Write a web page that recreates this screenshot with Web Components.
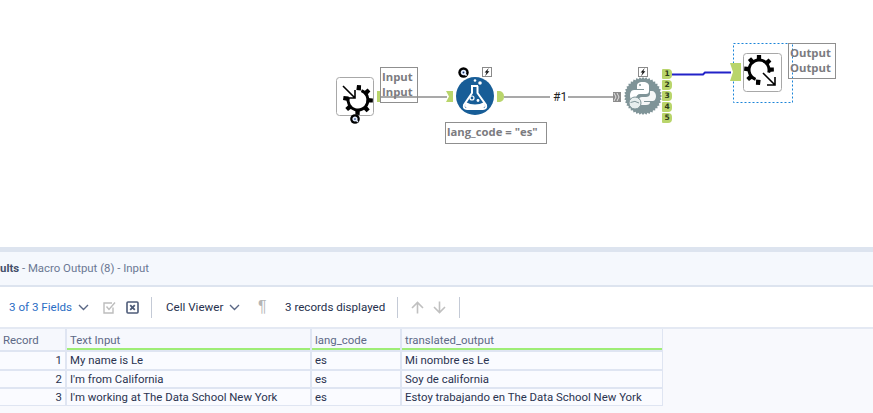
<!DOCTYPE html>
<html>
<head>
<meta charset="utf-8">
<title>Workflow results</title>
<style>
  html, body { margin: 0; padding: 0; background: #fff; }
  body { width: 873px; height: 413px; overflow: hidden; font-family: Roboto, 'Noto Sans', sans-serif; }
</style>
</head>
<body>
<workflow-canvas></workflow-canvas>
<results-panel></results-panel>

<script>
// shared little svg helpers
const gearMarkup = (cx, cy, r, start, end, teeth) => {
  const rad = d => d * Math.PI / 180;
  const pt = (d, rr) => `${(cx + rr * Math.cos(rad(d))).toFixed(1)} ${(cy + rr * Math.sin(rad(d))).toFixed(1)}`;
  let s = `<path d="M${pt(start, r)} A${r} ${r} 0 1 1 ${pt(end, r)}" fill="none" stroke="#000" stroke-width="3"/>`;
  teeth.forEach(d => {
    s += `<path d="M${pt(d - 13, r)} L${pt(d - 8, r + 5)} L${pt(d + 8, r + 5)} L${pt(d + 13, r)} Z" fill="#000"/>`;
  });
  return s;
};

const toothedCircle = (cx, cy, r, R, n) => {
  let d = '';
  for (let i = 0; i < n; i++) {
    const a = i * 2 * Math.PI / n, b = (i + 0.5) * 2 * Math.PI / n;
    d += `${i ? 'L' : 'M'}${(cx + R * Math.cos(a)).toFixed(1)} ${(cy + R * Math.sin(a)).toFixed(1)} L${(cx + r * Math.cos(b)).toFixed(1)} ${(cy + r * Math.sin(b)).toFixed(1)} `;
  }
  return d + 'Z';
};

const BOLT = `<svg width="10" height="10" viewBox="0 0 10 10" style="position:absolute;display:block">
  <rect x=".5" y=".5" width="9" height="9" fill="#fff" stroke="#8a8a8a"/>
  <path d="M6.8 .9 L2.6 5.6 H4.6 L3 9.2 L7.4 4.2 H5.3 Z" fill="#111"/></svg>`;

const qBadge = (x, y, r) => `<circle cx="${x}" cy="${y}" r="${r}" fill="#000"/>
  <circle cx="${x}" cy="${y}" r="${r * 0.36}" fill="#12306e" stroke="#e4eeff" stroke-width="${r * 0.36}"/>
  <path d="M${x + r * 0.15} ${y + r * 0.15} L${x + r * 0.6} ${y + r * 0.6}" stroke="#e4eeff" stroke-width="${r * 0.3}"/>`;

const tplCanvas = document.createElement('template');
tplCanvas.innerHTML = `
  <style>
    :host { display: block; position: relative; height: 247px; background: #fff; overflow: hidden; }
    svg.wires { position: absolute; left: 0; top: 0; }
    .tool { position: absolute; }
    .bolt { position: absolute; width: 10px; height: 10px; }
  </style>
  <svg class="wires" width="873" height="247" viewBox="0 0 873 247">
    <path d="M380 97 H447" stroke="#a9a9a9" stroke-width="2" fill="none"/>
    <path d="M504 97 H550 M568 97 H614" stroke="#a9a9a9" stroke-width="2" fill="none"/>
    <path d="M672 74.5 H703 L705 72.5 H731" stroke="#2222c8" stroke-width="2" fill="none"/>
    <rect x="733.5" y="43.5" width="59" height="59" fill="none" stroke="#1b84d8" stroke-dasharray="2 2"/>
    <path d="M377 91 H380 V102 H377 Z" fill="#b9d56b"/>
    <path d="M446 91 H453 V102 H446 L449 96.5 Z" fill="#b9d56b"/>
    <path d="M497 91 H500 Q504 92 504 96.5 Q504 101 500 102 H497 Z" fill="#b9d56b"/>
    <path d="M730 63 H741 V81 H730 L733 72 Z" fill="#b9d56b"/>
    <rect x="613" y="92" width="8" height="10" fill="#8b8b8b"/>
    <path d="M614 93 l2 4 -2 4 M617 93 l2 4 -2 4" stroke="#e4e4e4" fill="none"/>
  </svg>
  <note-box style="left:380px;top:67px;width:38px;height:36px"><div>Input</div><div>Input</div></note-box>
  <note-box style="left:445px;top:122px;width:102px;height:22px"><div>lang_code = "es"</div></note-box>
  <note-box style="left:788px;top:43px;width:48px;height:36px"><div>Output</div><div>Output</div></note-box>
  <tool-node kind="in" style="left:336px;top:77px"></tool-node>
  <tool-node kind="flask" style="left:456px;top:77px"></tool-node>
  <tool-node kind="python" style="left:624px;top:77px"></tool-node>
  <tool-node kind="out" style="left:743px;top:53px"></tool-node>
  <svg class="tool" style="left:350px;top:114px" width="10" height="10" id="q1"></svg>
  <svg class="tool" style="left:458px;top:67px" width="11" height="11" id="q2"></svg>
  <div class="bolt" style="left:482px;top:67px">${BOLT}</div>
  <div class="bolt" style="left:638px;top:67px">${BOLT}</div>
  <wire-label style="left:553px;top:88px">#1</wire-label>
  <out-anchors style="left:662px;top:69px"></out-anchors>
`;

class WorkflowCanvas extends HTMLElement {
  constructor() {
    super();
    this.attachShadow({ mode: 'open' });
    this.shadowRoot.appendChild(tplCanvas.content.cloneNode(true));
    this.shadowRoot.getElementById('q1').innerHTML = qBadge(5, 5, 4.8);
    this.shadowRoot.getElementById('q2').innerHTML = qBadge(5.5, 5.5, 5.2);
  }
}

class NoteBox extends HTMLElement {
  constructor() {
    super();
    this.attachShadow({ mode: 'open' }).innerHTML = `
      <style>
        :host {
          position: absolute; display: block; box-sizing: border-box;
          border: 1px solid #8f8f8f; border-right-width: 1.5px; border-bottom-width: 1.5px;
          padding: 1px 1px 0 1px;
          font: 700 11.3px/15px 'Open Sans', sans-serif; color: #7b7b80;
          white-space: nowrap;
        }
      </style><slot></slot>`;
  }
}

class WireLabel extends HTMLElement {
  constructor() {
    super();
    this.attachShadow({ mode: 'open' }).innerHTML = `
      <style>
        :host { position: absolute; display: block; font: 12px/18px Roboto, sans-serif; color: #222; }
      </style><slot></slot>`;
  }
}

class OutAnchors extends HTMLElement {
  constructor() {
    super();
    this.attachShadow({ mode: 'open' }).innerHTML = `
      <style>
        :host { position: absolute; display: flex; flex-direction: column; width: 10px; }
        span {
          display: block; height: 10px; margin-bottom: 1px; background: #b9d56b;
          border-radius: 1px 4px 4px 1px; text-align: center;
          font: bold 7.5px/10px 'DejaVu Sans', sans-serif; color: #2d3a1a;
        }
      </style>
      <span>1</span><span>2</span><span>3</span><span>4</span><span>5</span>`;
  }
}

class ToolNode extends HTMLElement {
  constructor() {
    super();
    const kind = this.getAttribute('kind');
    let art = '';
    if (kind === 'in') {
      art = `<svg width="38" height="40" viewBox="0 0 38 40">
        <rect x=".5" y=".5" width="37" height="38" rx="3" fill="#fff" stroke="#a8a8a8"/>
        ${gearMarkup(22, 23, 10, -70, 195, [-86, -42, 2, 47, 92, 140, 188])}
        <path d="M7 9 L19 21 M19 13 V21 H11" fill="none" stroke="#000" stroke-width="1.6"/>
      </svg>`;
    } else if (kind === 'out') {
      art = `<svg width="40" height="40" viewBox="0 0 40 40">
        <rect x=".5" y=".5" width="38" height="38" rx="3" fill="#fff" stroke="#a8a8a8"/>
        ${gearMarkup(16, 17, 10, 110, 15, [-90, -42, -2, 94, 140, 185, 230])}
        <path d="M20 20 L32 32 M32 24 V32 H24" fill="none" stroke="#000" stroke-width="1.6"/>
      </svg>`;
    } else if (kind === 'flask') {
      art = `<svg width="38" height="38" viewBox="0 0 38 38">
        <circle cx="19" cy="19" r="19" fill="#175d97"/>
        <circle cx="19" cy="3.5" r="1.3" fill="#fff"/><circle cx="24" cy="6" r="1.8" fill="#fff"/>
        <path d="M15 9 H22 M16 9 V16 L8 28 Q7 32 11 32 H27 Q31 32 30 28 L21.5 16 V9" fill="none" stroke="#fff" stroke-width="2"/>
        <path d="M9.5 25 Q19 30 28.5 25 L29 29 Q29 31 27 31 H11 Q9 31 9 29 Z" fill="#fff"/>
        <circle cx="16" cy="21" r="2" fill="none" stroke="#fff" stroke-width="1.2"/>
        <circle cx="22" cy="23.5" r="1.4" fill="#fff"/>
      </svg>`;
    } else {
      art = `<svg width="38" height="38" viewBox="0 0 38 38">
        <path d="${toothedCircle(19, 19, 17.4, 19, 36)}" fill="#7f9498"/>
        <path d="M19 5 C14 5 13 7 13 9 V12 H20 V13 H10 C7 13 6 16 6 19 C6 22 8 24 10 24 H12 V21 C12 19 14 17 16 17 H22 C24 17 25 16 25 14 V9 C25 7 23 5 19 5 Z" fill="#fff"/>
        <circle cx="16" cy="8" r="1" fill="#7f9498"/>
        <path d="M26 14 V17 C26 19 24 20 22 20 H18 C16 20 15 21 15 23 V28 H22 C25 28 26 27 26 25 H20 V24 H29 C31 24 32 21 32 19 C32 16 30 14 28 14 Z" fill="#fff" opacity=".92"/>
        <circle cx="11" cy="26" r="6" fill="#e8eeee" stroke="#7f9498"/>
        <path d="M6.5 25.5 Q11 23 15 26" stroke="#7f9498" fill="none"/>
      </svg>`;
    }
    this.attachShadow({ mode: 'open' }).innerHTML = `
      <style>
        :host { position: absolute; display: block; line-height: 0; }
      </style>${art}`;
  }
}

const tplPanel = document.createElement('template');
tplPanel.innerHTML = `
  <style>
    :host { display: block; height: 166px; background: #f8f9fd; }
    .band { height: 5px; background: #dde4ef; }
    .title {
      box-sizing: border-box; height: 35px; background: #f5f8fd;
      border-bottom: 2px solid #dde4ef; padding-bottom: 2px;
      display: flex; align-items: center; white-space: pre;
      font-size: 11.4px; color: #6b7894;
    }
    .title b { color: #46506b; font-weight: 700; }
    .rule { height: 2px; background: #e4e9f3; }
  </style>
  <div class="band"></div>
  <div class="title"><b>ults</b> - Macro Output (8) - Input</div>
  <results-toolbar></results-toolbar>
  <div class="rule"></div>
  <data-table></data-table>
`;

class ResultsPanel extends HTMLElement {
  constructor() {
    super();
    this.attachShadow({ mode: 'open' });
    this.shadowRoot.appendChild(tplPanel.content.cloneNode(true));
  }
}

const CHEV = `<svg width="11" height="7" viewBox="0 0 11 7"><path d="M1 1 L5.5 5.5 L10 1" fill="none" stroke="#5a6785" stroke-width="1.4"/></svg>`;

class ResultsToolbar extends HTMLElement {
  constructor() {
    super();
    this.attachShadow({ mode: 'open' }).innerHTML = `
      <style>
        :host {
          display: flex; align-items: center; box-sizing: border-box; height: 40px;
          background: #fff; padding-left: 9px;
          font-size: 11.6px; color: #26304d; white-space: nowrap;
        }
        .fields { color: #2a6ec4; }
        .sep { width: 1px; height: 21px; background: #c4cad6; }
        svg { display: block; flex: none; }
        .pil { font: 16px 'Liberation Sans', sans-serif; color: #b5b5b5; }
        span { flex: none; }
      </style>
      <span class="fields" style="width:62px">3 of 3 Fields</span>
      ${CHEV.replace('<svg', '<svg style="margin-left:7px"')}
      <svg style="margin-left:14px" width="13" height="13" viewBox="0 0 13 13">
        <path d="M10 6.5 V12 H1 V2 H9" fill="none" stroke="#bdbdbd" stroke-width="1.4"/>
        <path d="M3.5 5.5 L6 8.5 L12 1.5" fill="none" stroke="#bdbdbd" stroke-width="1.4"/>
      </svg>
      <svg style="margin-left:10px" width="13" height="13" viewBox="0 0 13 13">
        <rect x="1" y="1" width="11" height="11" rx="1" fill="none" stroke="#4d5b78" stroke-width="1.6"/>
        <path d="M4.2 4.2 L8.8 8.8 M8.8 4.2 L4.2 8.8" stroke="#4d5b78" stroke-width="1.8"/>
      </svg>
      <div class="sep" style="margin-left:12px"></div>
      <span style="margin-left:14px;width:56px">Cell Viewer</span>
      ${CHEV.replace('<svg', '<svg style="margin-left:7px"')}
      <span class="pil" style="margin-left:18px;width:11px">¶</span>
      <span style="margin-left:16px;width:102px">3 records displayed</span>
      <div class="sep" style="margin-left:10px"></div>
      <svg style="margin-left:13px" width="13" height="13" viewBox="0 0 13 13"><path d="M6.5 12.5 V1.5 M1 7 L6.5 1.5 L12 7" fill="none" stroke="#c0c0c0" stroke-width="1.6"/></svg>
      <svg style="margin-left:9px" width="13" height="13" viewBox="0 0 13 13"><path d="M6.5 .5 V11.5 M1 6 L6.5 11.5 L12 6" fill="none" stroke="#c0c0c0" stroke-width="1.6"/></svg>
      <div class="sep" style="margin-left:13px"></div>`;
  }
}

class DataTable extends HTMLElement {
  constructor() {
    super();
    const cols = ['Record', 'Text Input', 'lang_code', 'translated_output'];
    const rows = [
      ['1', 'My name is Le', 'es', 'Mi nombre es Le'],
      ['2', "I'm from California", 'es', 'Soy de california'],
      ['3', "I'm working at The Data School New York", 'es', 'Estoy trabajando en The Data School New York']
    ];
    let cells = cols.map((c, i) => `<div class="h${i ? ' green' : ''}">${c}</div>`).join('');
    rows.forEach(r => {
      cells += r.map((c, i) => `<div class="c${i ? '' : ' num'}">${c}</div>`).join('');
    });
    this.attachShadow({ mode: 'open' }).innerHTML = `
      <style>
        :host {
          display: grid; width: 663px; box-sizing: border-box;
          grid-template-columns: 65px 243px 88px 260px;
          grid-template-rows: 21px 17px 16px 16px;
          column-gap: 2px; row-gap: 2px; background: #dfe5f2;
          border-right: 1px solid #dfe5f2; border-bottom: 1px solid #dfe5f2;
          font-size: 11.4px; white-space: nowrap;
        }
        .h {
          box-sizing: border-box; background: #f6f8fd; color: #5d6986; padding: 0 0 0 3px;
          line-height: 22px;
        }
        .h:first-child { padding-left: 0; color: #46506b; }
        .h.green { border-bottom: 2px solid #9eed76; }
        .c { background: #fafbff; color: #2a3350; padding-left: 3px; line-height: 17px; }
        .num { text-align: right; padding: 0 3px 0 0; }
      </style>${cells}`;
  }
}

customElements.define('note-box', NoteBox);
customElements.define('wire-label', WireLabel);
customElements.define('out-anchors', OutAnchors);
customElements.define('tool-node', ToolNode);
customElements.define('workflow-canvas', WorkflowCanvas);
customElements.define('results-toolbar', ResultsToolbar);
customElements.define('data-table', DataTable);
customElements.define('results-panel', ResultsPanel);
</script>
</body>
</html>
